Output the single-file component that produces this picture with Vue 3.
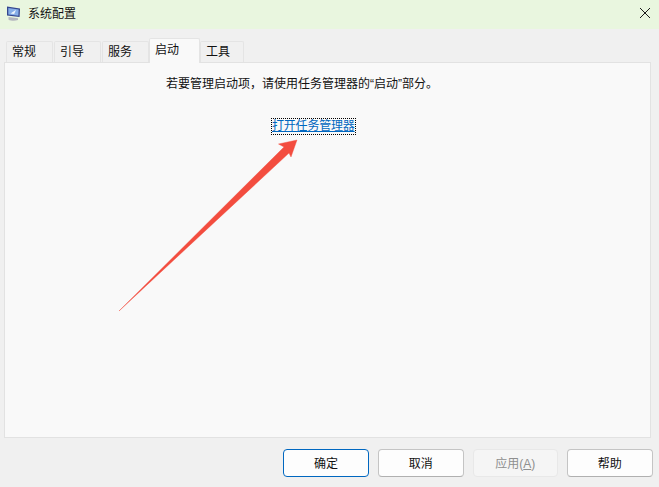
<script setup>
const tabs = [
  { name: '常规' },
  { name: '引导' },
  { name: '服务' },
  { name: '启动', active: true },
  { name: '工具' }
]

const buttons = [
  { label: '确定', kind: 'primary' },
  { label: '取消' },
  { label: '应用', accel: 'A', kind: 'disabled' },
  { label: '帮助' }
]
</script>

<template>
  <div class="dialog">
    <header class="titlebar">
      <svg class="app-icon" viewBox="0 0 15 15" width="15" height="15">
        <path d="M1 .5 14 2.5 13.6 11 1 9.5z" fill="#34468f" />
        <path d="M2.3 2 12.7 3.6 12.4 9.7 2.3 8.5z" fill="#86aee8" />
        <path d="M4.5 7.5 10 3.8 8.2 8z" fill="#eef5fd" />
        <path d="M2.5 11 12 12.2V14c-3 1-7 .8-9.500-.3z" fill="#b4b7bf" />
      </svg>
      <span class="title">系统配置</span>
      <svg class="close" viewBox="0 0 10 10" width="10" height="10">
        <path d="M0 0 10 10M10 0 0 10" stroke="#1a1a1a" stroke-width="1" fill="none" />
      </svg>
    </header>

    <nav class="tabs">
      <div
        v-for="tab in tabs"
        :key="tab.name"
        :class="['tab', { active: tab.active }]"
      >
        {{ tab.name }}
      </div>
    </nav>

    <section class="panel">
      <p class="hint">若要管理启动项，请使用任务管理器的“启动”部分。</p>
      <a class="link">打开任务管理器</a>
    </section>

    <footer class="actions">
      <button
        v-for="btn in buttons"
        :key="btn.label"
        :class="['btn', btn.kind]"
      >
        {{ btn.label }}<template v-if="btn.accel">(<u>{{ btn.accel }}</u>)</template>
      </button>
    </footer>

    <svg class="arrow" viewBox="0 0 659 487" width="659" height="487">
      <path d="M119 311 L284 147 L278.500 144 L297 140 L291 157 L289 153 Z" fill="#f34d3f" stroke="#f34d3f" stroke-width="0.4" stroke-linejoin="round" />
    </svg>
  </div>
</template>

<style scoped>
.dialog {
  position: relative;
  width: 659px;
  height: 487px;
  overflow: hidden;
  background: #f0f0f0;
  font-family: "Liberation Sans", "Noto Sans CJK SC", sans-serif;
  font-size: 12px;
  color: #111;
}

.titlebar {
  display: flex;
  align-items: center;
  height: 29px;
  padding: 0 9px 3px 6px;
  box-sizing: border-box;
  background: #e9f6df;
}

.app-icon {
  flex: none;
}

.title {
  margin-left: 7px;
  margin-top: -1px;
  font-size: 12px;
}

.close {
  margin-left: auto;
}

.tabs {
  display: flex;
  align-items: flex-end;
  height: 33px;
  padding-left: 6px;
  box-sizing: border-box;
}

.tab {
  display: flex;
  align-items: center;
  width: 47px;
  height: 21px;
  margin-right: 1px;
  padding: 0 0 4px 5px;
  box-sizing: border-box;
  border: 1px solid #e4e4e4;
  border-bottom: none;
  border-radius: 2px 2px 0 0;
  background: #f0f0f0;
}

.tab.active {
  position: relative;
  z-index: 1;
  width: 51px;
  height: 25px;
  margin: 0 0 -1px -1px;
  padding-bottom: 5px;
  background: #f9f9f9;
}

.tab:last-child {
  width: 44px;
}

.panel {
  display: flex;
  flex-direction: column;
  align-items: flex-start;
  height: 376px;
  margin: 0 8px 0 4px;
  padding-top: 12px;
  box-sizing: border-box;
  border: 1px solid #e2e2e2;
  background: #f9f9f9;
}

.hint {
  margin: 0 0 0 161px;
  line-height: 18px;
}

.link {
  margin: 26px 0 0 267px;
  line-height: 15px;
  letter-spacing: -0.2px;
  color: #0067c0;
  text-decoration: underline;
  outline: 1px dotted #000;
}

.actions {
  display: flex;
  justify-content: flex-end;
  gap: 9.250px;
  padding: 11px 6.500px 0 0;
}

.btn {
  width: 85.500px;
  height: 28px;
  padding: 0 0 1px;
  box-sizing: border-box;
  border: 1px solid #c4c4c4;
  border-bottom-color: #b0b0b0;
  border-radius: 4px;
  background: #fdfdfd;
  font-family: inherit;
  font-size: 12px;
  color: #111;
}

.btn.primary {
  border: 1px solid #0067c0;
}

.btn.disabled {
  width: 85px;
  border-color: #e8e8e8;
  background: #f5f5f5;
  color: #8f8f8f;
}

.arrow {
  position: absolute;
  left: 0;
  top: 0;
  pointer-events: none;
}
</style>
